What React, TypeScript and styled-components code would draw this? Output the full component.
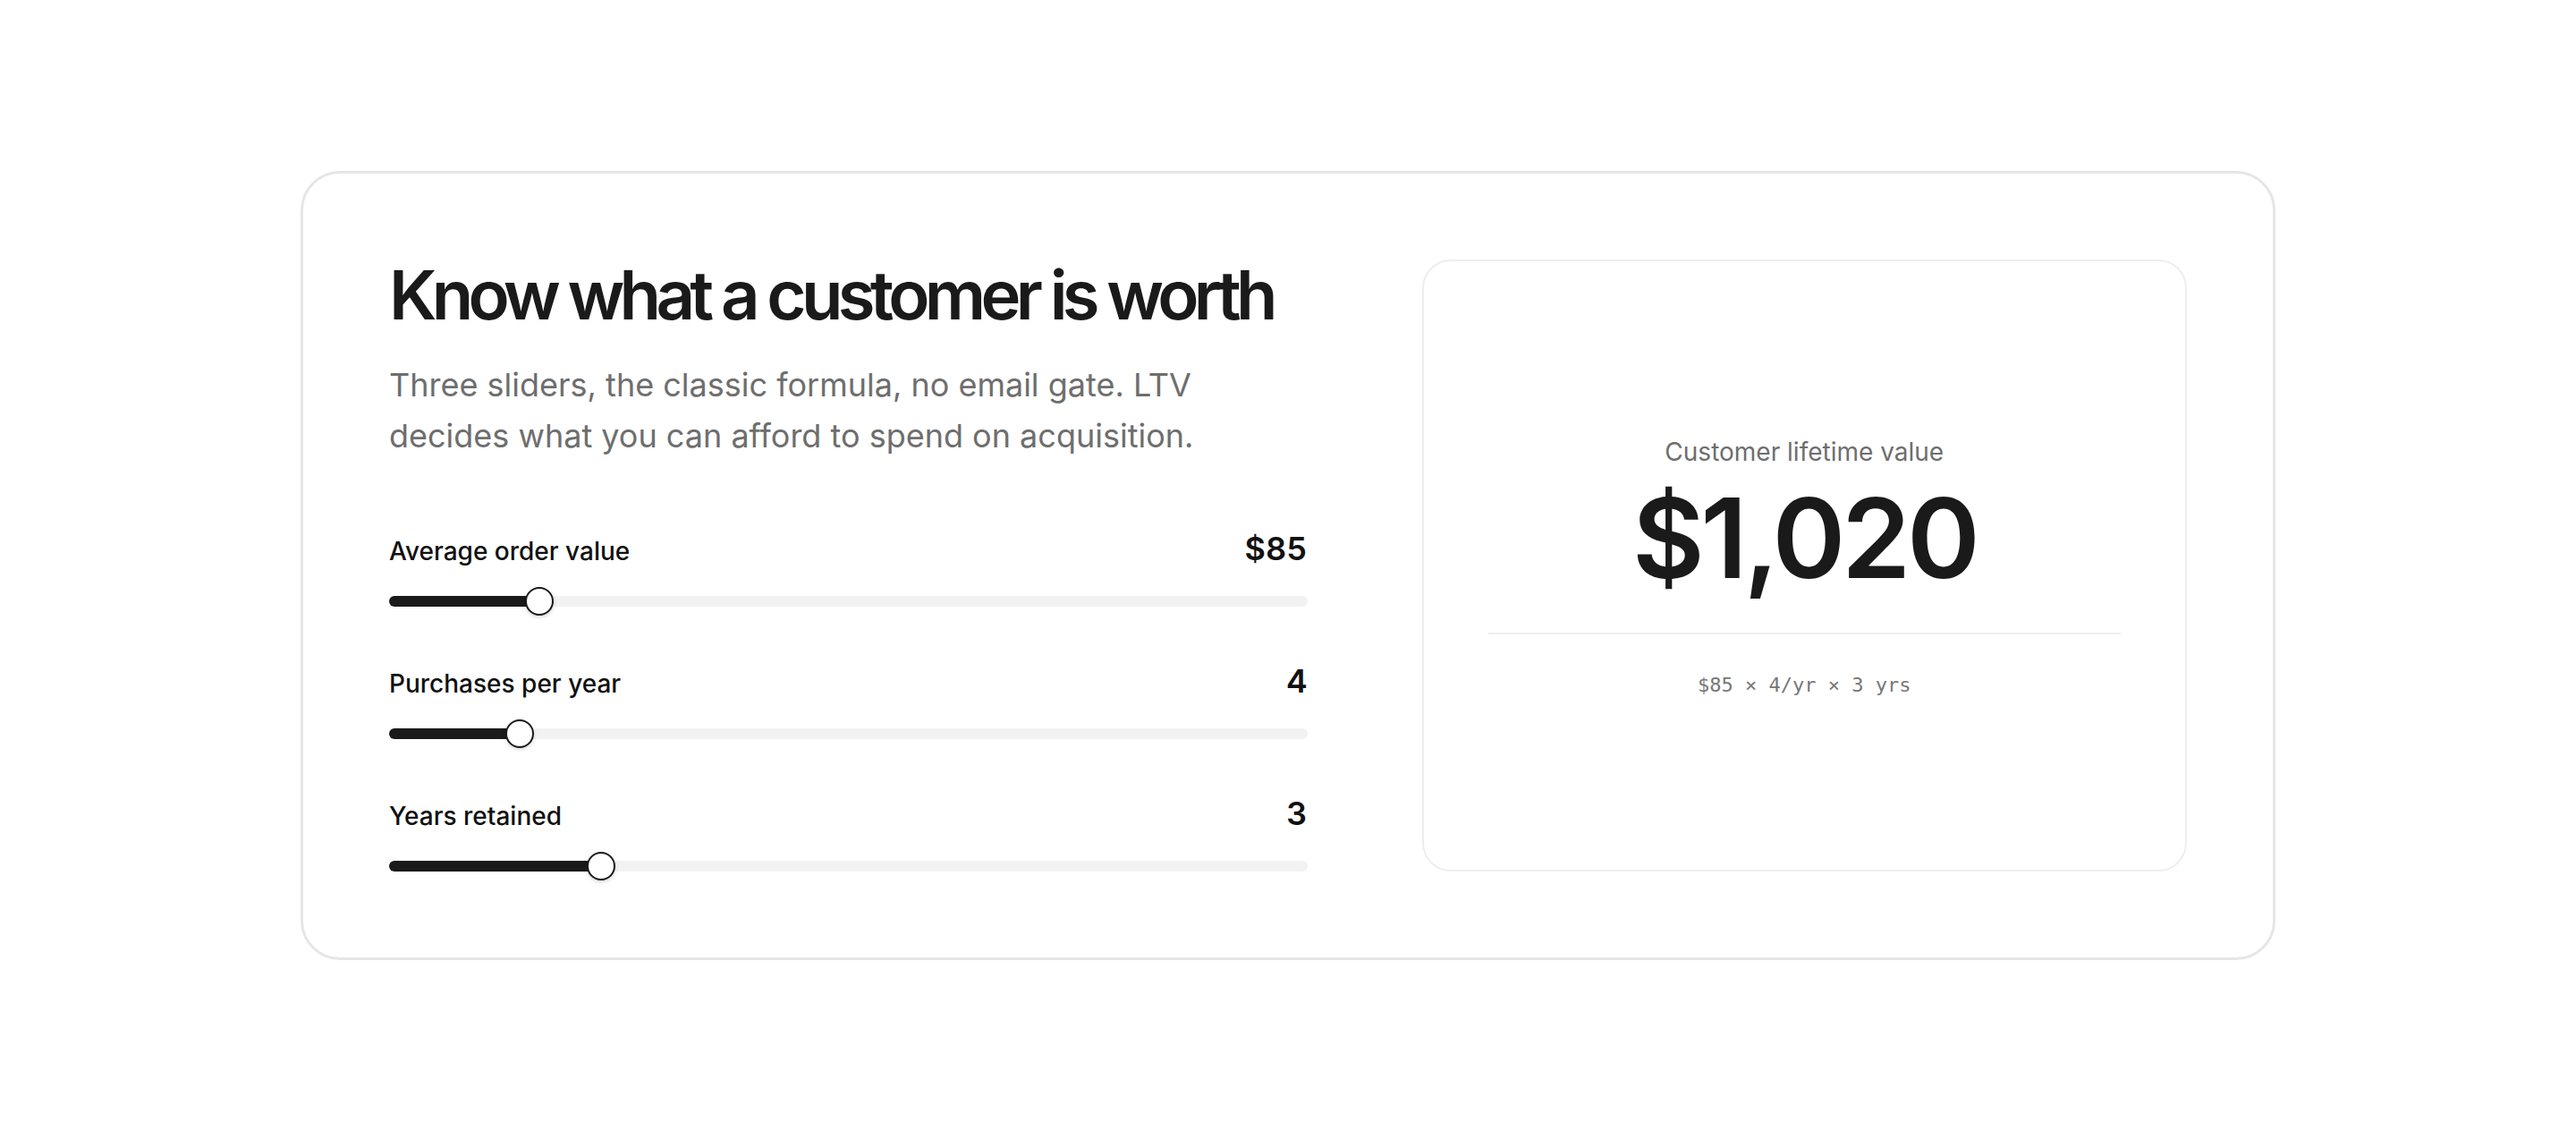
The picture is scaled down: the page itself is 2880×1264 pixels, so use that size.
import React, { useState } from 'react';
import styled, { createGlobalStyle } from 'styled-components';

const GlobalStyle = createGlobalStyle`
  * {
    box-sizing: border-box;
  }
  html,
  body {
    margin: 0;
    padding: 0;
    background: #ffffff;
    font-family: Inter, 'Noto Sans', sans-serif;
    color: #1a1a1a;
  }
  #root {
    min-height: 100vh;
  }
`;

type SliderField = {
  key: 'aov' | 'freq' | 'years';
  label: string;
  min: number;
  max: number;
  format: (v: number) => string;
};

const FIELDS: SliderField[] = [
  { key: 'aov', label: 'Average order value', min: 10, max: 500, format: v => `$${v}` },
  { key: 'freq', label: 'Purchases per year', min: 1, max: 24, format: v => `${v}` },
  { key: 'years', label: 'Years retained', min: 1, max: 10, format: v => `${v}` },
];

function App() {
  const [values, setValues] = useState({ aov: 85, freq: 4, years: 3 });
  const ltv = values.aov * values.freq * values.years;

  return (
    <Page>
      <GlobalStyle />
      <Card>
        <Controls>
          <Title>Know what a customer is worth</Title>
          <Lead>
            Three sliders, the classic formula, no email gate. LTV decides what
            you can afford to spend on acquisition.
          </Lead>
          <SliderList>
            {FIELDS.map(field => {
              const value = values[field.key];
              const frac = (value - field.min) / (field.max - field.min);
              return (
                <SliderRow key={field.key}>
                  <SliderHead>
                    <SliderLabel htmlFor={field.key}>{field.label}</SliderLabel>
                    <SliderValue>{field.format(value)}</SliderValue>
                  </SliderHead>
                  <Range
                    id={field.key}
                    type="range"
                    min={field.min}
                    max={field.max}
                    value={value}
                    onChange={e =>
                      setValues(prev => ({ ...prev, [field.key]: Number(e.target.value) }))
                    }
                    style={{ ['--fill' as string]: frac }}
                  />
                </SliderRow>
              );
            })}
          </SliderList>
        </Controls>
        <Result>
          <ResultLabel>Customer lifetime value</ResultLabel>
          <ResultValue>${ltv.toLocaleString('en-US')}</ResultValue>
          <Divider />
          <Formula>
            ${values.aov} × {values.freq}/yr × {values.years} yrs
          </Formula>
        </Result>
      </Card>
    </Page>
  );
}

export default App;

const Page = styled.main`
  min-height: 100vh;
  display: flex;
  align-items: center;
  justify-content: center;
`;

const Card = styled.section`
  width: 2208px;
  padding: 96px;
  border: 3px solid #e6e6e6;
  border-radius: 44px;
  background: #ffffff;
  display: grid;
  grid-template-columns: 1.2fr 1fr;
  gap: 128px;
`;

const Controls = styled.div`
  display: flex;
  flex-direction: column;
`;

const Title = styled.h1`
  margin: 0;
  font-size: 76px;
  line-height: 78px;
  font-weight: 600;
  letter-spacing: -0.075em;
  white-space: nowrap;
  color: #1a1a1a;
`;

const Lead = styled.p`
  margin: 34px 0 0;
  max-width: 920px;
  font-size: 36px;
  line-height: 57px;
  font-weight: 400;
  color: #6e6e6e;
`;

const SliderList = styled.div`
  margin-top: 75px;
  display: flex;
  flex-direction: column;
  gap: 61px;
`;

const SliderRow = styled.div`
  display: flex;
  flex-direction: column;
  gap: 31px;
`;

const SliderHead = styled.div`
  display: flex;
  justify-content: space-between;
  align-items: baseline;
`;

const SliderLabel = styled.label`
  font-size: 28px;
  font-weight: 500;
  color: #111111;
`;

const SliderValue = styled.span`
  font-size: 36px;
  font-weight: 600;
  color: #111111;
  font-variant-numeric: tabular-nums;
`;

const Range = styled.input`
  -webkit-appearance: none;
  appearance: none;
  width: 100%;
  height: 12px;
  margin: 0;
  background: transparent;
  cursor: pointer;

  &::-webkit-slider-runnable-track {
    height: 12px;
    border-radius: 999px;
    background: linear-gradient(
      to right,
      #1a1a1a calc(16px + var(--fill) * (100% - 32px)),
      #f2f2f2 calc(16px + var(--fill) * (100% - 32px))
    );
  }

  &::-webkit-slider-thumb {
    -webkit-appearance: none;
    appearance: none;
    width: 32px;
    height: 32px;
    margin-top: -10px;
    border-radius: 50%;
    background: #ffffff;
    border: 2.5px solid #1a1a1a;
    box-shadow: 0 2px 4px rgba(0, 0, 0, 0.15);
  }

  &:focus {
    outline: none;
  }
`;

const Result = styled.div`
  border: 2px solid #eeeeee;
  border-radius: 32px;
  padding: 72px;
  display: flex;
  flex-direction: column;
  align-items: center;
  justify-content: center;
  text-align: center;
`;

const ResultLabel = styled.div`
  font-size: 28px;
  line-height: 1.4;
  color: #6e6e6e;
`;

const ResultValue = styled.div`
  margin-top: 8px;
  font-size: 124px;
  line-height: 1.1;
  font-weight: 600;
  letter-spacing: -0.034em;
  color: #1a1a1a;
`;

const Divider = styled.hr`
  align-self: stretch;
  margin: 38px 0 0;
  border: none;
  border-top: 2px solid #eeeeee;
`;

const Formula = styled.div`
  margin-top: 44px;
  font-family: 'DejaVu Sans Mono', 'Liberation Mono', monospace;
  font-size: 22px;
  color: #777777;
`;
